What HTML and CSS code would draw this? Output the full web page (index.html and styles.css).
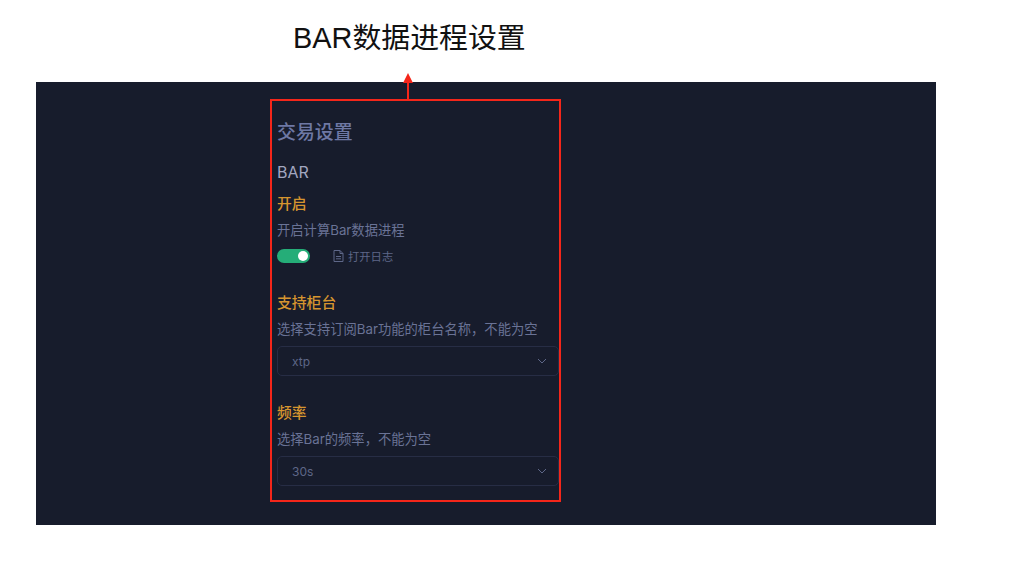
FILE: index.html
```html
<!DOCTYPE html>
<html lang="zh">
<head>
<meta charset="utf-8">
<title>BAR数据进程设置</title>
<link rel="stylesheet" href="styles.css">
</head>
<body>
<header class="caption"><h1>BAR数据进程设置</h1></header>
<main class="panel">
  <section class="callout">
    <svg class="arrow" width="12" height="28" viewBox="0 0 12 28" aria-hidden="true"><path d="M6 0 L11 10 H7 V28 H5 V10 H1 Z"/></svg>
    <h2 class="heading">交易设置</h2>
    <h3 class="group">BAR</h3>
    <div class="field first">
      <div class="label">开启</div>
      <div class="desc">开启计算Bar数据进程</div>
      <div class="toggle-row">
        <span class="switch"><span class="knob"></span></span>
        <span class="log">
          <svg width="11" height="12" viewBox="0 0 11 12" fill="none" stroke="currentColor" stroke-width="1" aria-hidden="true"><path d="M1 .5H7L10 3.5V11.5H1Z"/><path d="M7 .5V3.5H10M3 6.5H8M3 8.8H8"/></svg>
          打开日志
        </span>
      </div>
    </div>
    <div class="field second">
      <div class="label">支持柜台</div>
      <div class="desc">选择支持订阅Bar功能的柜台名称，不能为空</div>
      <div class="select"><span>xtp</span>
        <svg width="10" height="6" viewBox="0 0 10 6" fill="none" stroke="currentColor" aria-hidden="true"><path d="M1 1L5 5L9 1"/></svg>
      </div>
    </div>
    <div class="field third">
      <div class="label">频率</div>
      <div class="desc">选择Bar的频率，不能为空</div>
      <div class="select"><span>30s</span>
        <svg width="10" height="6" viewBox="0 0 10 6" fill="none" stroke="currentColor" aria-hidden="true"><path d="M1 1L5 5L9 1"/></svg>
      </div>
    </div>
  </section>
</main>
</body>
</html>
```
FILE: styles.css
```css
* { box-sizing: border-box; }
html, body { margin: 0; height: 568px; overflow: hidden; background: #fff; }
body { font-family: "Liberation Sans", "Noto Sans CJK SC", sans-serif; }
h1, h2, h3 { margin: 0; font-weight: 400; }
.caption { height: 82px; padding: 21px 0 0 293px; }
.caption h1 { font-size: 28.9px; line-height: 34px; color: #111; }
.panel { width: 900px; height: 443px; margin-left: 36px; padding: 17px 0 0 234px; background: #171c2c; }
.callout { position: relative; width: 291px; height: 403px; border: 2px solid #f4261a; padding: 20px 0 0 5px; font-family: Inter, "Noto Sans CJK SC", sans-serif; }
.arrow { position: absolute; left: 130px; top: -28px; fill: #f4261a; }
.heading { font-size: 18.9px; line-height: 24px; color: #6e78a4; font-weight: 500; }
.group { font-size: 16px; line-height: 20px; margin-top: 17px; color: #a2a7c0; }
.label { font-size: 14.8px; line-height: 20px; color: #d6952f; font-weight: 500; }
.desc { font-size: 13.3px; line-height: 18px; margin-top: 7px; color: #6a7396; white-space: nowrap; }
.first { margin-top: 12px; }
.second { margin-top: 28px; }
.third { margin-top: 27px; }
.toggle-row { display: flex; align-items: center; margin-top: 8px; height: 18px; }
.switch { display: flex; align-items: center; justify-content: flex-end; width: 33px; height: 14px; padding-right: 2px; border-radius: 7px; background: #25ad78; }
.knob { width: 10px; height: 10px; border-radius: 50%; background: #fff; }
.log { display: flex; align-items: center; gap: 4px; margin-left: 23px; font-size: 11.3px; color: #5e6788; }
.select { display: flex; align-items: center; justify-content: space-between; width: 282px; height: 30px; margin-top: 8px; padding: 0 11px 0 14px; border: 1px solid #272d45; border-radius: 5px; font-size: 12px; color: #5e6788; }
```
